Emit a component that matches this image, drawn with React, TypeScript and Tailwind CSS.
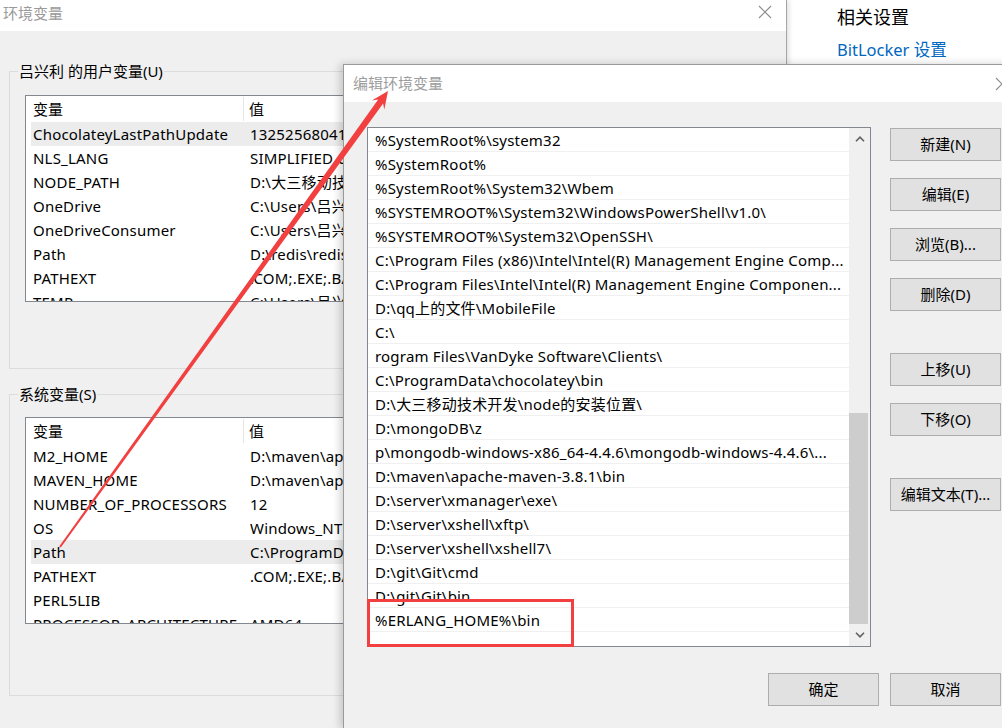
import React from 'react';

/* ── Data ── */
const userVars: [string, string][] = [
  ['ChocolateyLastPathUpdate', '132525680411986372'],
  ['NLS_LANG', 'SIMPLIFIED CHINESE_CHINA.ZHS16GBK'],
  ['NODE_PATH', 'D:\\大三移动技术开发\\node的安装位置\\node_global'],
  ['OneDrive', 'C:\\Users\\吕兴利\\OneDrive'],
  ['OneDriveConsumer', 'C:\\Users\\吕兴利\\OneDrive'],
  ['Path', 'D:\\redis\\redis;C:\\Users\\吕兴利\\AppData'],
  ['PATHEXT', '.COM;.EXE;.BAT;.CMD;.VBS;.VBE'],
  ['TEMP', 'C:\\Users\\吕兴利\\AppData\\Local\\Temp'],
];

const sysVars: [string, string][] = [
  ['M2_HOME', 'D:\\maven\\apache-maven-3.8.1'],
  ['MAVEN_HOME', 'D:\\maven\\apache-maven-3.8.1'],
  ['NUMBER_OF_PROCESSORS', '12'],
  ['OS', 'Windows_NT'],
  ['Path', 'C:\\ProgramData\\chocolatey\\bin;'],
  ['PATHEXT', '.COM;.EXE;.BAT;.CMD;.VBS'],
  ['PERL5LIB', ''],
  ['PROCESSOR_ARCHITECTURE', 'AMD64'],
];

const paths = [
  '%SystemRoot%\\system32',
  '%SystemRoot%',
  '%SystemRoot%\\System32\\Wbem',
  '%SYSTEMROOT%\\System32\\WindowsPowerShell\\v1.0\\',
  '%SYSTEMROOT%\\System32\\OpenSSH\\',
  'C:\\Program Files (x86)\\Intel\\Intel(R) Management Engine Comp...',
  'C:\\Program Files\\Intel\\Intel(R) Management Engine Componen...',
  'D:\\qq上的文件\\MobileFile',
  'C:\\',
  'rogram Files\\VanDyke Software\\Clients\\',
  'C:\\ProgramData\\chocolatey\\bin',
  'D:\\大三移动技术开发\\node的安装位置\\',
  'D:\\mongoDB\\z',
  'p\\mongodb-windows-x86_64-4.4.6\\mongodb-windows-4.4.6\\...',
  'D:\\maven\\apache-maven-3.8.1\\bin',
  'D:\\server\\xmanager\\exe\\',
  'D:\\server\\xshell\\xftp\\',
  'D:\\server\\xshell\\xshell7\\',
  'D:\\git\\Git\\cmd',
  'D:\\git\\Git\\bin',
  '%ERLANG_HOME%\\bin',
  '',
];

/* ── Small pieces ── */
function CloseX({ className }: { className?: string }) {
  return (
    <svg className={className} width="14" height="14" viewBox="0 0 14 14">
      <path d="M1 1 L13 13 M13 1 L1 13" stroke="#8a8a8a" strokeWidth="1.1" fill="none" />
    </svg>
  );
}

function Chevron({ up }: { up?: boolean }) {
  return (
    <svg width="10" height="6" viewBox="0 0 10 6">
      <path
        d={up ? 'M1 5.2 L5 1.2 L9 5.2' : 'M1 0.8 L5 4.8 L9 0.8'}
        stroke="#606060"
        strokeWidth="1.6"
        fill="none"
      />
    </svg>
  );
}

function WinButton({ label }: { label: string }) {
  return (
    <div className="flex h-[33px] w-[111px] shrink-0 items-center justify-center border border-[#adadad] bg-[#e1e1e1] text-[15px] text-black">
      {label}
    </div>
  );
}

function VarList({ rows, selected }: { rows: [string, string][]; selected: number }) {
  return (
    <div className="ml-[15px] h-[207px] w-[740px] overflow-hidden border border-[#828790] bg-white">
      <div className="flex h-[26px] items-center text-[15px]">
        <div className="h-[24px] w-[218px] border-r border-[#e5e5e5] pl-[7px] leading-[24px]">变量</div>
        <div className="pl-[5px]">值</div>
      </div>
      {rows.map(([k, v], i) => (
        <div
          key={k}
          className={`ml-[5px] flex h-[24px] items-center whitespace-nowrap text-[15px] tracking-[0.2px] ${
            i === selected ? 'bg-[#ececec]' : ''
          }`}
        >
          <div className="w-[213px] overflow-hidden pl-[2px]">{k}</div>
          <div className="pl-[6px]">{v}</div>
        </div>
      ))}
    </div>
  );
}

function GroupBox({
  label,
  height,
  rows,
  selected,
  listTop,
}: {
  label: string;
  height: string;
  rows: [string, string][];
  selected: number;
  listTop: string;
}) {
  return (
    <div className={`relative ml-[9px] w-[768px] border border-[#dcdcdc] ${height}`}>
      <span className="absolute left-[8px] top-[-11px] bg-[#f0f0f0] px-[1px] text-[15px] leading-[20px] text-black">
        {label}
      </span>
      <div className={listTop}>
        <VarList rows={rows} selected={selected} />
      </div>
    </div>
  );
}

/* ══════════════════════════════════════════════════════════════════════════
   APP
   ══════════════════════════════════════════════════════════════════════════ */
export default function App() {
  return (
    <div className="relative h-[728px] w-[1002px] overflow-hidden bg-[#f0f0f0] font-['Noto_Sans','Noto_Sans_CJK_SC',sans-serif] text-black">
      {/* Desktop: env vars window + settings page */}
      <div className="flex h-full">
        {/* 环境变量 window */}
        <div className="z-[1] flex h-full w-[787px] shrink-0 flex-col border-r border-[#a6a6a6] bg-[#f0f0f0] shadow-[2px_0_5px_rgba(0,0,0,0.12)]">
          <div className="flex h-[31px] items-start justify-between bg-white">
            <span className="pl-[3px] pt-[3px] text-[15px] leading-[20px] text-[#9a9a9a]">环境变量</span>
            <CloseX className="mr-[14px] mt-[5px]" />
          </div>
          <div className="flex flex-col pt-[40px]">
            <GroupBox
              label="吕兴利 的用户变量(U)"
              height="h-[298px]"
              rows={userVars}
              selected={0}
              listTop="pt-[23px]"
            />
            <div className="h-[25px]" />
            <GroupBox
              label="系统变量(S)"
              height="h-[302px]"
              rows={sysVars}
              selected={4}
              listTop="pt-[22px]"
            />
          </div>
        </div>

        {/* Settings page */}
        <div className="flex-1 bg-white pl-[50px] pt-[5px]">
          <div className="text-[18px] leading-[24px] text-black">相关设置</div>
          <div className="mt-[10px] text-[16.5px] leading-[22px] text-[#0067c0]">BitLocker 设置</div>
        </div>
      </div>

      {/* 编辑环境变量 dialog */}
      <div className="absolute left-[343px] top-[64px] z-[2] flex h-[665px] w-[700px] flex-col border border-[#9a9a9a] bg-[#f0f0f0] shadow-[-3px_0_8px_rgba(0,0,0,0.18)]">
        <div className="flex h-[37px] shrink-0 items-center justify-between bg-white">
          <span className="pl-[9px] text-[15px] text-[#9d9d9d]">编辑环境变量</span>
          <CloseX className="mr-[33px]" />
        </div>

        <div className="flex w-[657px] flex-col pl-[23px] pt-[25px]">
          <div className="flex">
            {/* Path list */}
            <div className="flex h-[520px] w-[504px] border border-[#828790] bg-white">
              <div className="flex-1 overflow-hidden">
                {paths.map((p, i) => (
                  <div
                    key={i}
                    className="h-[24px] overflow-hidden whitespace-nowrap border-b border-[#f0f0f0] pl-[7px] text-[15px] leading-[25px] tracking-[0.2px]"
                  >
                    {p}
                  </div>
                ))}
              </div>
              {/* Scrollbar */}
              <div className="flex w-[21px] flex-col bg-[#f0f0f0]">
                <div className="flex h-[22px] items-center justify-center">
                  <Chevron up />
                </div>
                <div className="flex-1" />
                <div className="mr-[2px] h-[211px] bg-[#cdcdcd]" />
                <div className="flex h-[22px] items-center justify-center">
                  <Chevron />
                </div>
              </div>
            </div>

            {/* Buttons column */}
            <div className="ml-[19px] flex flex-col pt-[1px]">
              <div className="flex flex-col gap-[17px]">
                <WinButton label="新建(N)" />
                <WinButton label="编辑(E)" />
                <WinButton label="浏览(B)..." />
                <WinButton label="删除(D)" />
              </div>
              <div className="mt-[42px] flex flex-col gap-[17px]">
                <WinButton label="上移(U)" />
                <WinButton label="下移(O)" />
              </div>
              <div className="mt-[42px]">
                <WinButton label="编辑文本(T)..." />
              </div>
            </div>
          </div>

          <div className="mt-[26px] flex justify-end gap-[11px]">
            <WinButton label="确定" />
            <WinButton label="取消" />
          </div>
        </div>
      </div>

      {/* Annotation: red box */}
      <div className="absolute left-[367px] top-[599px] z-[3] h-[48px] w-[207px] border-[3px] border-[#f23f3f]" />

      {/* Annotation: red arrow */}
      <svg className="pointer-events-none absolute left-0 top-0 z-[3]" width="1002" height="728" viewBox="0 0 1002 728">
        <polygon
          points="60.8,547.5 383.1,103.4 384.3,109.6 388,91 371.9,100.4 378.2,99.5 59.2,546.5"
          fill="#f23f3f"
        />
      </svg>
    </div>
  );
}
